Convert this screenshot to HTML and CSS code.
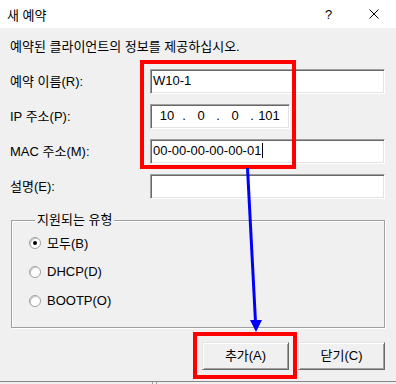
FILE: index.html
```html
<!DOCTYPE html>
<html lang="ko">
<head>
    <meta charset="UTF-8">
    <meta name="viewport" content="width=device-width, initial-scale=1.0">
    <title>새 예약</title>
    <link rel="stylesheet" href="styles.css">
</head>
<body>

<div class="dialog">
    <div class="titlebar">
        <span class="title">새 예약</span>
        <span class="tb-btn">?</span>
        <span class="tb-btn">
            <svg width="10" height="10" viewBox="0 0 10 10">
                <path d="M0.5 0.5 L9.5 9.5 M9.5 0.5 L0.5 9.5" stroke="#000" stroke-width="1" fill="none"/>
            </svg>
        </span>
    </div>

    <div class="content">
        <p class="intro">예약된 클라이언트의 정보를 제공하십시오.</p>

        <div class="fields">
            <label class="lbl">예약 이름(R):</label>
            <div class="edit">W10-1</div>

            <label class="lbl">IP 주소(P):</label>
            <div class="edit ip">
                <span class="seg">10</span><span class="dot">.</span>
                <span class="seg">0</span><span class="dot">.</span>
                <span class="seg">0</span><span class="dot">.</span>
                <span class="seg">101</span>
            </div>

            <label class="lbl">MAC 주소(M):</label>
            <div class="edit">00-00-00-00-00-01<span class="caret"></span></div>

            <label class="lbl">설명(E):</label>
            <div class="edit"></div>
        </div>

        <fieldset class="group">
            <legend>지원되는 유형</legend>
            <div class="radio-row"><span class="radio checked"></span>모두(B)</div>
            <div class="radio-row"><span class="radio"></span>DHCP(D)</div>
            <div class="radio-row"><span class="radio"></span>BOOTP(O)</div>
        </fieldset>

        <div class="buttons">
            <div class="btn">추가(A)</div>
            <div class="btn">닫기(C)</div>
        </div>
    </div>

    <div class="footer"><span class="grip"></span></div>

    <!-- 주석 표시 -->
    <div class="mark mark-fields"></div>
    <div class="mark mark-add"></div>
    <svg class="arrow" width="396" height="384" viewBox="0 0 396 384">
        <line x1="247.5" y1="168" x2="255.5" y2="322" stroke="#0000ff" stroke-width="3"/>
        <polygon points="250,320 262,320 256,332" fill="#0000ff"/>
    </svg>
</div>

</body>
</html>
```

FILE: styles.css
```css
body {
    margin: 0;
    padding: 0;
    font-family: "Liberation Sans", "Noto Sans CJK KR", sans-serif;
    font-size: 13px;
    color: #000;
    background-color: #f0f0f0;
}

.dialog {
    position: relative;
    width: 396px;
    height: 384px;
    overflow: hidden;
    background-color: #f0f0f0;
}

.titlebar {
    display: flex;
    align-items: center;
    height: 28px;
    background-color: #fff;
}

.title {
    flex: 1;
    padding-left: 7px;
}

.tb-btn {
    display: flex;
    align-items: center;
    justify-content: center;
    width: 45px;
    height: 28px;
    font-size: 13px;
}

.content {
    padding: 11px 11px 0 10px;
}

.intro {
    margin: 0 0 14px 0;
    line-height: 16px;
}

.fields {
    display: grid;
    grid-template-columns: 140px 235px;
    grid-auto-rows: 25px;
    row-gap: 10px;
    align-items: center;
}

.lbl {
    line-height: 16px;
}

.edit {
    box-sizing: border-box;
    height: 25px;
    padding: 0 2px;
    line-height: 21px;
    background-color: #fff;
    border: 1px solid;
    border-color: #a0a0a0 #fff #fff #a0a0a0;
    box-shadow: inset 1px 1px 0 #696969, inset -1px -1px 0 #e3e3e3;
    white-space: nowrap;
}

.ip {
    display: flex;
    width: 140px;
    padding-left: 3px;
}

.seg {
    width: 26px;
    text-align: center;
}

.dot {
    width: 8px;
    text-align: center;
}

.caret {
    display: inline-block;
    width: 1px;
    height: 15px;
    margin-left: 1px;
    vertical-align: -3px;
    background-color: #000;
}

.group {
    margin: 13px 0 0 1px;
    padding: 0 0 12px 17px;
    min-width: 0;
    border: 1px solid #a0a0a0;
    box-shadow: 1px 1px 0 #fff, inset 1px 1px 0 #fff;
}

.group legend {
    margin-left: 6px;
    padding: 0 2px;
    line-height: 16px;
    background-color: #f0f0f0;
}

.radio-row {
    display: flex;
    align-items: center;
    height: 29px;
    gap: 6px;
}

.radio {
    position: relative;
    box-sizing: border-box;
    width: 12px;
    height: 12px;
    border-radius: 50%;
    background-color: #fff;
    border: 1px solid #a0a0a0;
    box-shadow: inset 1px 1px 0 #c8c8c8;
}

.radio.checked::after {
    content: "";
    position: absolute;
    left: 3px;
    top: 3px;
    width: 4px;
    height: 4px;
    border-radius: 50%;
    background-color: #000;
}

.buttons {
    display: flex;
    justify-content: flex-end;
    gap: 9px;
    margin-top: 14px;
}

.btn {
    box-sizing: border-box;
    width: 87px;
    height: 28px;
    line-height: 26px;
    text-align: center;
    background-color: #f0f0f0;
    border: 1px solid;
    border-color: #e3e3e3 #696969 #696969 #e3e3e3;
    box-shadow: inset 1px 1px 0 #fff, inset -1px -1px 0 #a0a0a0;
}

.footer {
    position: relative;
    margin-top: 11px;
    height: 10px;
    border-top: 1px solid #888;
}

.grip {
    display: block;
    width: 3px;
    height: 10px;
    margin-left: 152px;
    border-left: 1px solid #a0a0a0;
    border-right: 1px solid #a0a0a0;
}

.mark {
    position: absolute;
    border: 4px solid #ff0000;
    box-sizing: border-box;
}

.mark-fields {
    left: 140px;
    top: 60px;
    width: 156px;
    height: 109px;
}

.mark-add {
    left: 193px;
    top: 332px;
    width: 104px;
    height: 47px;
}

.arrow {
    position: absolute;
    left: 0;
    top: 0;
    pointer-events: none;
}
```
